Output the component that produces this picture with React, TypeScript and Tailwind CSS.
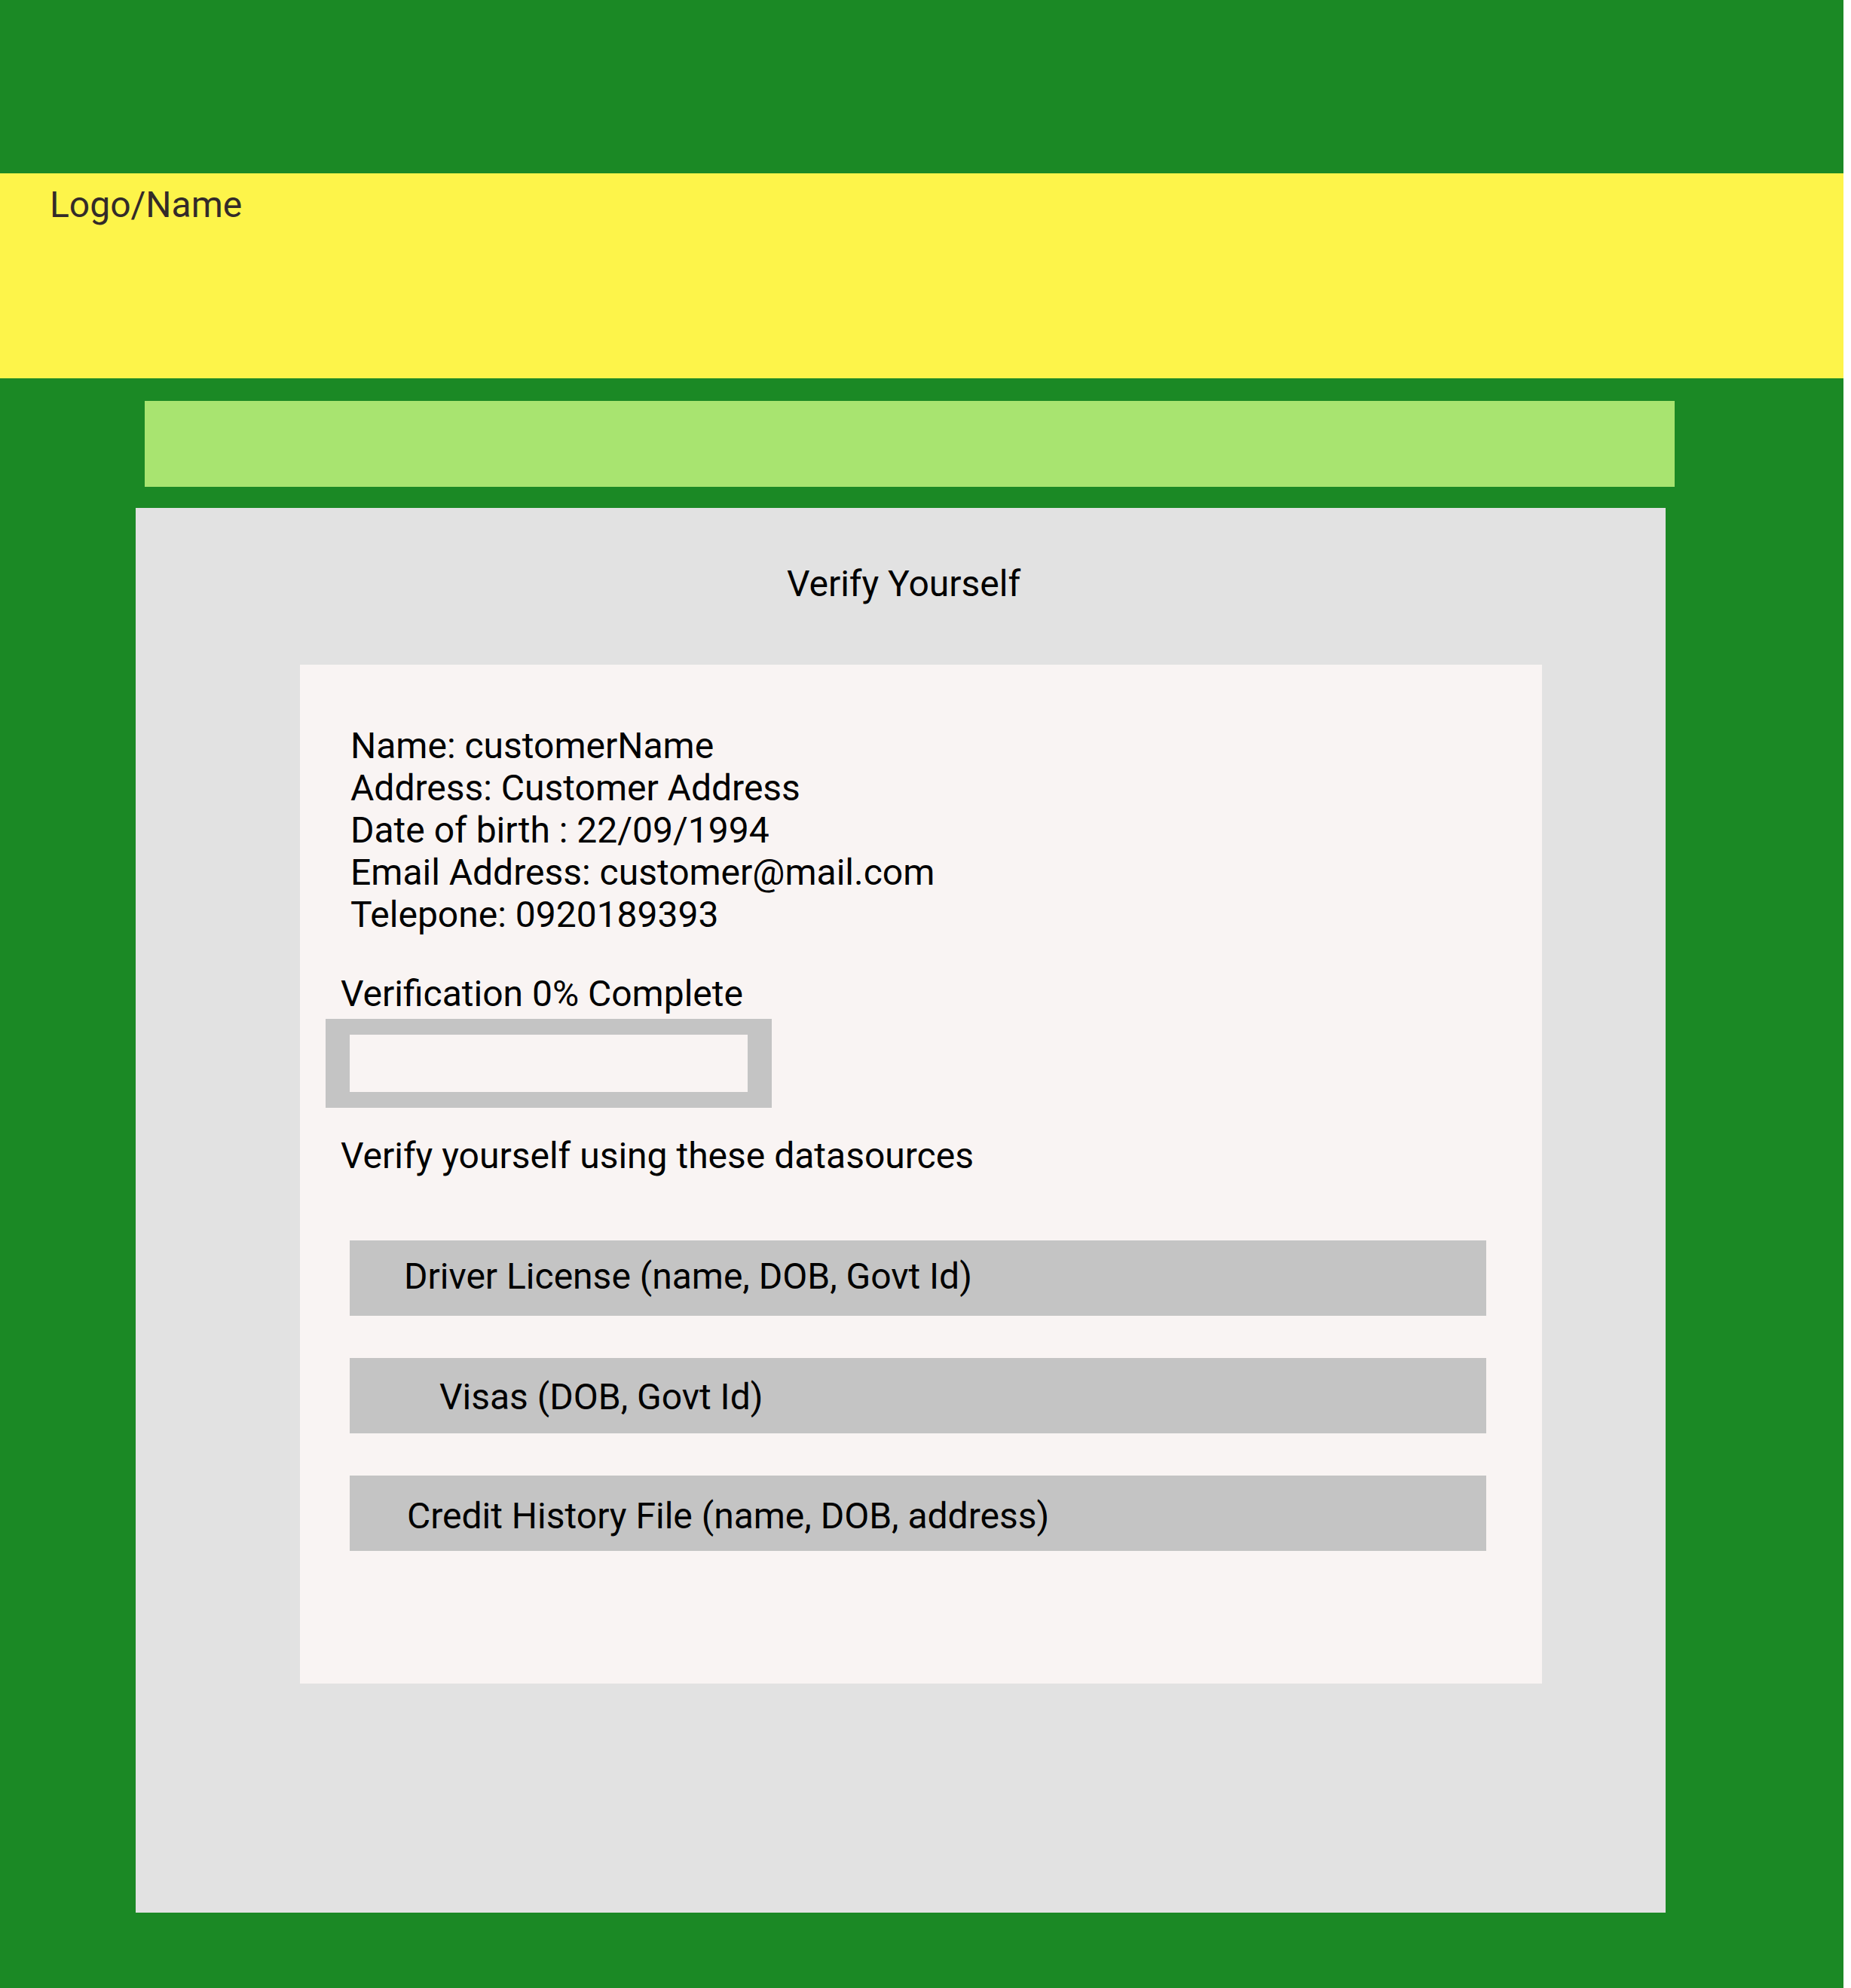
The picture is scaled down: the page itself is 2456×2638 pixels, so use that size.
const sources = [
  { label: 'Driver License (name, DOB, Govt Id)', pad: 'pl-[72px] pt-[20px]' },
  { label: 'Visas (DOB, Govt Id)', pad: 'pl-[119px] pt-[24px]' },
  { label: 'Credit History File (name, DOB, address)', pad: 'pl-[76px] pt-[26px]' },
];

const details = [
  'Name: customerName',
  'Address: Customer Address',
  'Date of birth : 22/09/1994',
  'Email Address: customer@mail.com',
  'Telepone: 0920189393',
];

const App = () => {
  return (
    <div className="w-[2446px] min-h-[2638px] bg-[#1b8925] font-['Roboto',sans-serif] text-[48px] leading-[56px] text-black">
      <div className="h-[230px]"></div>

      <header className="h-[272px] bg-[#fdf44a] pl-[66px] pt-[14px] text-[#332b29]">Logo/Name</header>

      <div className="pt-[30px] pl-[192px]">
        <div className="w-[2030px] h-[114px] bg-[#a8e470]"></div>
      </div>

      <div className="pt-[28px] pl-[180px] pb-[100px]">
        <main className="w-[2030px] h-[1864px] bg-[#e2e2e2] pt-[73px] flex flex-col">
          <h1 className="text-center pl-[8px]">Verify Yourself</h1>

          <section className="ml-[218px] mt-[79px] w-[1648px] h-[1352px] bg-[#f9f4f3] pt-[80px] flex flex-col">
            {/* customer details */}
            <div className="pl-[67px]">
              {details.map((line) => (
                <p key={line}>{line}</p>
              ))}
            </div>

            <p className="pl-[54px] mt-[49px]">Verification 0% Complete</p>
            <div className="ml-[34px] mt-[5px] w-[592px] h-[118px] border-x-[32px] border-y-[21px] border-[#c4c4c4]"></div>

            <p className="pl-[54px] mt-[36px]">Verify yourself using these datasources</p>

            <div className="mt-[84px] ml-[66px] flex flex-col gap-[56px]">
              {sources.map((s) => (
                <div key={s.label} className={`w-[1508px] h-[100px] bg-[#c4c4c4] ${s.pad}`}>
                  {s.label}
                </div>
              ))}
            </div>
          </section>
        </main>
      </div>
    </div>
  );
};

export default App;
